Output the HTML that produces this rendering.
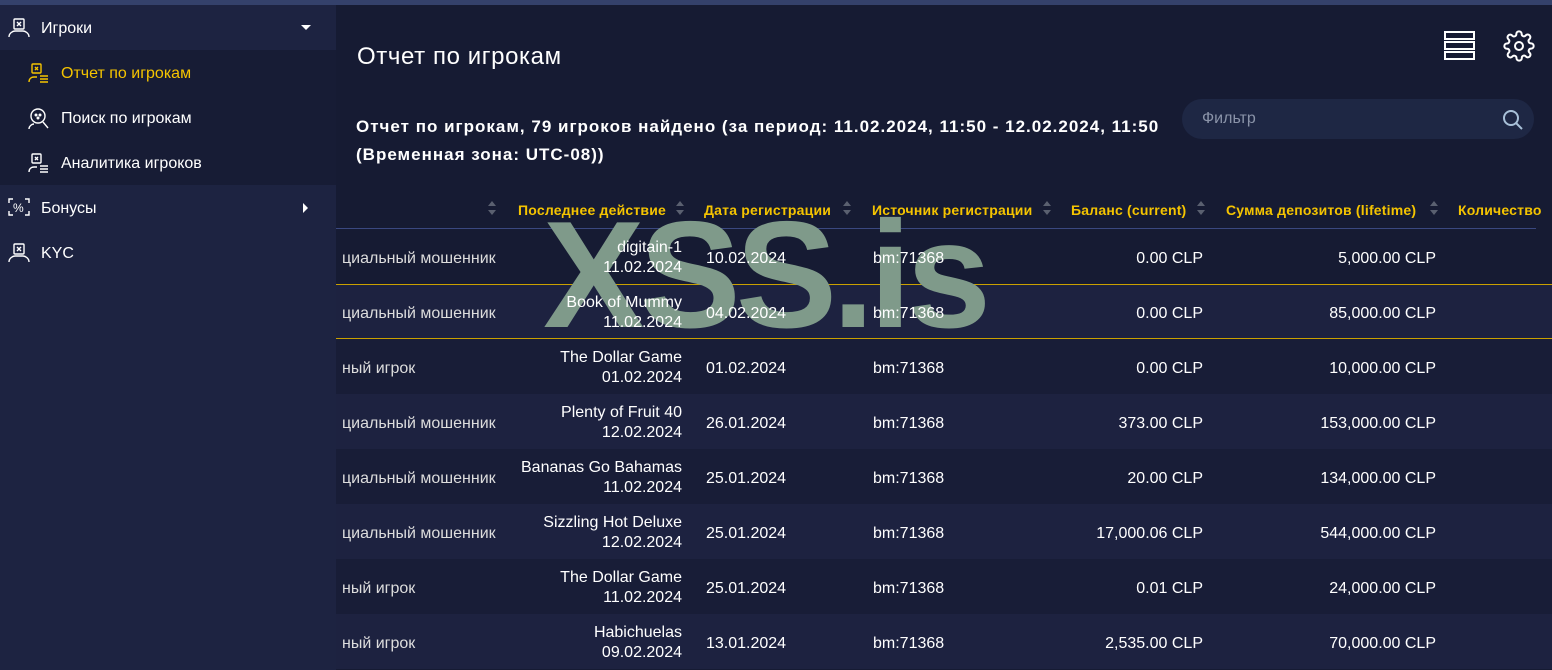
<!DOCTYPE html>
<html><head><meta charset="utf-8"><style>
*{margin:0;padding:0;box-sizing:border-box}
body{width:1552px;height:670px;overflow:hidden;background:#161b33;font-family:"Liberation Sans",sans-serif;color:#fff;position:relative}
.top{position:absolute;left:0;top:0;width:1552px;height:5px;background:#34416b}
.side{position:absolute;left:0;top:5px;width:336px;height:665px;background:#1d2341}
.item{position:absolute;left:0;width:336px;height:45px;font-size:16px;line-height:47px}
.sub{position:absolute;left:0;top:45px;width:336px;height:135px;background:#171c35}
.ic{position:absolute;top:13px}
.main{position:absolute;left:336px;top:5px;right:0;bottom:0}
h1{position:absolute;left:21px;top:38px;font-size:24px;font-weight:normal;letter-spacing:.6px}
.info{position:absolute;left:20px;top:108px;font-size:17px;font-weight:bold;line-height:28px;letter-spacing:1px}
.filter{position:absolute;left:846px;top:94px;width:352px;height:40px;border-radius:20px;background:#1e2744;color:#8a93a8;font-size:16px;line-height:40px;padding-left:20px}
.th{position:absolute;top:197px;font-size:14px;font-weight:bold;color:#f5c400;white-space:nowrap;letter-spacing:.2px}
.sort{position:absolute;top:195px;width:8px;height:16px}
.row{position:absolute;left:0;width:1216px;height:55px;font-size:16px}
.c{position:absolute;white-space:nowrap;z-index:2}
.wm{position:absolute;left:207px;top:195px;font-size:152px;font-weight:bold;color:#7f9a8a;letter-spacing:-5px;line-height:150px;z-index:1}
</style></head><body>
<div class="top"></div>
<div class="side">
 <div class="item" style="top:0">
  <svg class="ic" style="left:8px" width="22" height="20" viewBox="0 0 22 20" fill="none" stroke="#fff" stroke-width="1.4"><rect x="6" y="1" width="10" height="10" rx="1"/><path d="M9 4l4 4M13 4l-4 4"/><path d="M1 19c0-4 4-6 6-6h8c2 0 6 2 6 6"/></svg>
  <span style="position:absolute;left:41px">Игроки</span>
  <span style="position:absolute;left:301px;top:20px;width:0;height:0;border-left:5px solid transparent;border-right:5px solid transparent;border-top:5px solid #fff"></span>
 </div>
 <div class="sub">
  <div class="item" style="top:0;color:#f5c400">
   <svg class="ic" style="left:28px" width="22" height="20" viewBox="0 0 22 20" fill="none" stroke="#f5c400" stroke-width="1.4"><rect x="4" y="1" width="9" height="9" rx="1"/><path d="M7 4l3 3M10 4l-3 3"/><path d="M1 19c0-4 3-5 5-5h3M12 13h8M12 16h8M12 19h8"/></svg>
   <span style="position:absolute;left:61px">Отчет по игрокам</span></div>
  <div class="item" style="top:45px">
   <svg class="ic" style="left:28px" width="22" height="22" viewBox="0 0 22 22" fill="none" stroke="#fff" stroke-width="1.4"><circle cx="10" cy="8" r="7"/><circle cx="8" cy="7" r=".8"/><circle cx="12" cy="7" r=".8"/><circle cx="10" cy="10" r=".8"/><path d="M1 21c0-3 3-5 5-5M15 14l5 6"/></svg>
   <span style="position:absolute;left:61px">Поиск по игрокам</span></div>
  <div class="item" style="top:90px">
   <svg class="ic" style="left:28px" width="22" height="20" viewBox="0 0 22 20" fill="none" stroke="#fff" stroke-width="1.4"><rect x="4" y="1" width="9" height="9" rx="1"/><path d="M7 4l3 3M10 4l-3 3"/><path d="M1 19c0-4 3-5 5-5h3M12 13h8M12 16h8M12 19h8"/></svg>
   <span style="position:absolute;left:61px">Аналитика игроков</span></div>
 </div>
 <div class="item" style="top:180px">
  <svg class="ic" style="left:8px" width="22" height="18" viewBox="0 0 22 18" fill="none" stroke="#fff" stroke-width="1.4"><path d="M1 5V1h4M17 1h4v4M21 13v4h-4M5 17H1v-4"/><text x="5" y="14" font-size="12" fill="#fff" stroke="none" font-family="Liberation Sans">%</text></svg>
  <span style="position:absolute;left:41px">Бонусы</span>
  <span style="position:absolute;left:303px;top:18px;width:0;height:0;border-top:5px solid transparent;border-bottom:5px solid transparent;border-left:5px solid #fff"></span>
 </div>
 <div class="item" style="top:225px">
  <svg class="ic" style="left:8px" width="22" height="20" viewBox="0 0 22 20" fill="none" stroke="#fff" stroke-width="1.4"><rect x="6" y="1" width="10" height="10" rx="1"/><path d="M9 4l4 4M13 4l-4 4"/><path d="M1 19c0-4 4-6 6-6h8c2 0 6 2 6 6"/></svg>
  <span style="position:absolute;left:41px">KYC</span></div>
</div>
<div class="main">
 <h1>Отчет по игрокам</h1>
 <svg style="position:absolute;left:1108px;top:25px" width="32" height="32" viewBox="0 0 32 32" fill="none" stroke="#fff" stroke-width="2"><rect x="1" y="2" width="29" height="7"/><rect x="1" y="12" width="29" height="7"/><rect x="1" y="22" width="29" height="7"/></svg>
 <svg style="position:absolute;left:1167px;top:25px" width="32" height="32" viewBox="0 0 24 24" fill="none" stroke="#fff" stroke-width="1.5"><circle cx="12" cy="12" r="3"/><path d="M19.4 15a1.7 1.7 0 0 0 .3 1.8l.1.1a2 2 0 1 1-2.8 2.8l-.1-.1a1.7 1.7 0 0 0-1.8-.3 1.7 1.7 0 0 0-1 1.5V21a2 2 0 1 1-4 0v-.1a1.7 1.7 0 0 0-1.1-1.5 1.7 1.7 0 0 0-1.800.3l-.1.1a2 2 0 1 1-2.8-2.8l.1-.1a1.7 1.7 0 0 0 .3-1.8 1.7 1.7 0 0 0-1.5-1H3a2 2 0 1 1 0-4h.1a1.7 1.7 0 0 0 1.5-1.1 1.7 1.7 0 0 0-.3-1.8l-.1-.1a2 2 0 1 1 2.8-2.8l.1.1a1.7 1.7 0 0 0 1.8.3H9a1.7 1.7 0 0 0 1-1.5V3a2 2 0 1 1 4 0v.1a1.7 1.7 0 0 0 1 1.5 1.7 1.7 0 0 0 1.8-.3l.1-.1a2 2 0 1 1 2.8 2.8l-.1.1a1.7 1.7 0 0 0-.3 1.8V9a1.7 1.7 0 0 0 1.5 1H21a2 2 0 1 1 0 4h-.1a1.7 1.7 0 0 0-1.5 1z"/></svg>
 <div class="info">Отчет по игрокам, 79 игроков найдено (за период: 11.02.2024, 11:50 - 12.02.2024, 11:50<br>(Временная зона: UTC-08))</div>
 <div class="filter">Фильтр
  <svg style="position:absolute;right:10px;top:10px" width="22" height="22" viewBox="0 0 22 22" fill="none" stroke="#a8c0d8" stroke-width="2"><circle cx="9" cy="9" r="7"/><path d="M14 14l6 6"/></svg></div>

 <span class="sort" style="left:152px"><svg width="8" height="16"><path d="M0 6l4-5 4 5z M0 10l4 5 4-5z" fill="#5a6070"/></svg></span>
 <div class="th" style="left:182px">Последнее действие</div>
 <span class="sort" style="left:340px"><svg width="8" height="16"><path d="M0 6l4-5 4 5z M0 10l4 5 4-5z" fill="#5a6070"/></svg></span>
 <div class="th" style="left:368px">Дата регистрации</div>
 <span class="sort" style="left:507px"><svg width="8" height="16"><path d="M0 6l4-5 4 5z M0 10l4 5 4-5z" fill="#5a6070"/></svg></span>
 <div class="th" style="left:536px">Источник регистрации</div>
 <span class="sort" style="left:707px"><svg width="8" height="16"><path d="M0 6l4-5 4 5z M0 10l4 5 4-5z" fill="#5a6070"/></svg></span>
 <div class="th" style="left:735px">Баланс (current)</div>
 <span class="sort" style="left:861px"><svg width="8" height="16"><path d="M0 6l4-5 4 5z M0 10l4 5 4-5z" fill="#5a6070"/></svg></span>
 <div class="th" style="left:890px">Сумма депозитов (lifetime)</div>
 <span class="sort" style="left:1094px"><svg width="8" height="16"><path d="M0 6l4-5 4 5z M0 10l4 5 4-5z" fill="#5a6070"/></svg></span>
 <div class="th" style="left:1122px">Количество</div>
 <div style="position:absolute;left:0;top:223px;width:1200px;height:1px;background:#3a4880"></div>

 <div class="row" style="top:224px;background:#161b33"><span class="c" style="left:6px;top:21px;color:#ddd">циальный мошенник</span><span class="c" style="right:870px;top:9px;text-align:right;line-height:20px">digitain-1<br>11.02.2024</span><span class="c" style="left:370px;top:21px">10.02.2024</span><span class="c" style="left:537px;top:21px">bm:71368</span><span class="c" style="right:349px;top:21px">0.00 CLP</span><span class="c" style="right:116px;top:21px">5,000.00 CLP</span></div>
 <div class="row" style="top:279px;background:#1d2240;border-top:1px solid #c9a000;border-bottom:1px solid #c9a000"><span class="c" style="left:6px;top:20px;color:#ddd">циальный мошенник</span><span class="c" style="right:870px;top:8px;text-align:right;line-height:20px">Book of Mummy<br>11.02.2024</span><span class="c" style="left:370px;top:20px">04.02.2024</span><span class="c" style="left:537px;top:20px">bm:71368</span><span class="c" style="right:349px;top:20px">0.00 CLP</span><span class="c" style="right:116px;top:20px">85,000.00 CLP</span></div>
 <div class="row" style="top:334px;background:#181d37"><span class="c" style="left:6px;top:21px;color:#ddd">ный игрок</span><span class="c" style="right:870px;top:9px;text-align:right;line-height:20px">The Dollar Game<br>01.02.2024</span><span class="c" style="left:370px;top:21px">01.02.2024</span><span class="c" style="left:537px;top:21px">bm:71368</span><span class="c" style="right:349px;top:21px">0.00 CLP</span><span class="c" style="right:116px;top:21px">10,000.00 CLP</span></div>
 <div class="row" style="top:389px;background:#1d2240"><span class="c" style="left:6px;top:21px;color:#ddd">циальный мошенник</span><span class="c" style="right:870px;top:9px;text-align:right;line-height:20px">Plenty of Fruit 40<br>12.02.2024</span><span class="c" style="left:370px;top:21px">26.01.2024</span><span class="c" style="left:537px;top:21px">bm:71368</span><span class="c" style="right:349px;top:21px">373.00 CLP</span><span class="c" style="right:116px;top:21px">153,000.00 CLP</span></div>
 <div class="row" style="top:444px;background:#181d37"><span class="c" style="left:6px;top:21px;color:#ddd">циальный мошенник</span><span class="c" style="right:870px;top:9px;text-align:right;line-height:20px">Bananas Go Bahamas<br>11.02.2024</span><span class="c" style="left:370px;top:21px">25.01.2024</span><span class="c" style="left:537px;top:21px">bm:71368</span><span class="c" style="right:349px;top:21px">20.00 CLP</span><span class="c" style="right:116px;top:21px">134,000.00 CLP</span></div>
 <div class="row" style="top:499px;background:#1d2240"><span class="c" style="left:6px;top:21px;color:#ddd">циальный мошенник</span><span class="c" style="right:870px;top:9px;text-align:right;line-height:20px">Sizzling Hot Deluxe<br>12.02.2024</span><span class="c" style="left:370px;top:21px">25.01.2024</span><span class="c" style="left:537px;top:21px">bm:71368</span><span class="c" style="right:349px;top:21px">17,000.06 CLP</span><span class="c" style="right:116px;top:21px">544,000.00 CLP</span></div>
 <div class="row" style="top:554px;background:#181d37"><span class="c" style="left:6px;top:21px;color:#ddd">ный игрок</span><span class="c" style="right:870px;top:9px;text-align:right;line-height:20px">The Dollar Game<br>11.02.2024</span><span class="c" style="left:370px;top:21px">25.01.2024</span><span class="c" style="left:537px;top:21px">bm:71368</span><span class="c" style="right:349px;top:21px">0.01 CLP</span><span class="c" style="right:116px;top:21px">24,000.00 CLP</span></div>
 <div class="row" style="top:609px;background:#1d2240"><span class="c" style="left:6px;top:21px;color:#ddd">ный игрок</span><span class="c" style="right:870px;top:9px;text-align:right;line-height:20px">Habichuelas<br>09.02.2024</span><span class="c" style="left:370px;top:21px">13.01.2024</span><span class="c" style="left:537px;top:21px">bm:71368</span><span class="c" style="right:349px;top:21px">2,535.00 CLP</span><span class="c" style="right:116px;top:21px">70,000.00 CLP</span></div>
 <div class="wm">XSS.is</div>
</div>
</body></html>
